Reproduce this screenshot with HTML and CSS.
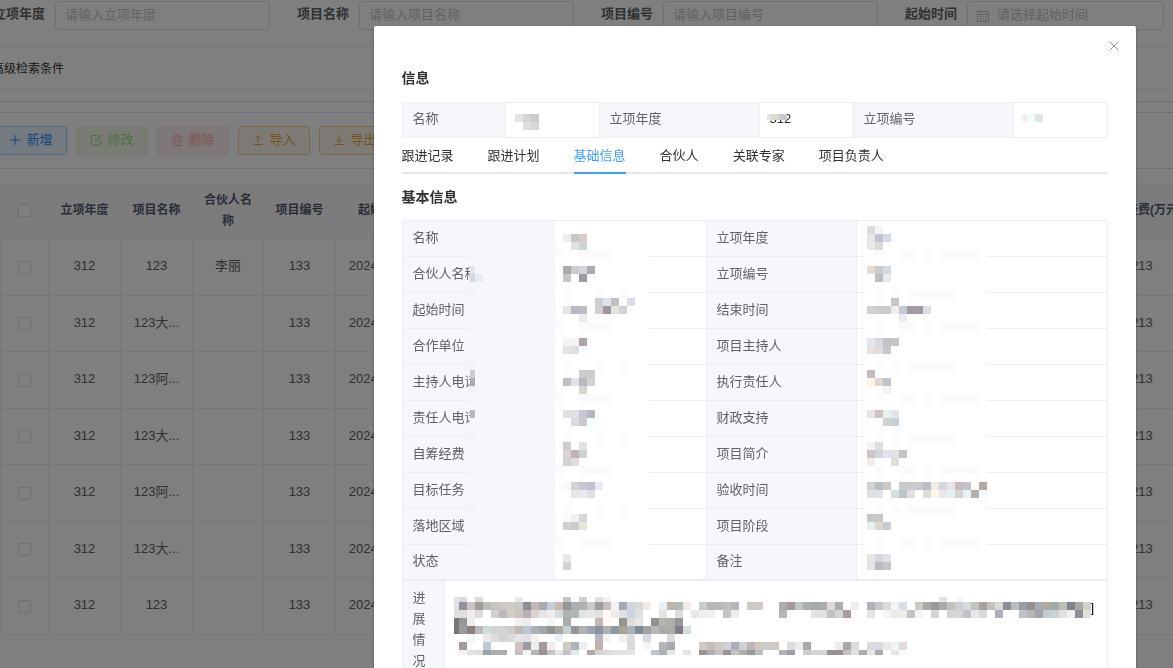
FILE: index.html
```html
<!DOCTYPE html>
<html lang="zh-CN">
<head>
<meta charset="utf-8">
<title>项目信息</title>
<link rel="stylesheet" href="styles.css">
</head>
<body>
<main class="page">
  <form class="filters">
    <div class="field"><label for="f-year">立项年度</label><input id="f-year" class="box" type="text" placeholder="请输入立项年度"></div>
    <div class="field"><label for="f-name">项目名称</label><input id="f-name" class="box" type="text" placeholder="请输入项目名称"></div>
    <div class="field"><label for="f-code">项目编号</label><input id="f-code" class="box" type="text" placeholder="请输入项目编号"></div>
    <div class="field field-date"><label for="f-start">起始时间</label>
      <div class="box date-box">
        <svg class="calendar" viewBox="0 0 12 12" fill="none" stroke="currentColor"><path d="M.5 1.5h11v10H.5zM.5 4.5h11M3.5 0v2.5M8.5 0v2.5M2.5 6.5h1.5M5.3 6.5h1.5M8 6.5h1.5M2.5 9h1.5M5.3 9h1.5M8 9h1.5"/></svg>
        <input id="f-start" type="text" placeholder="请选择起始时间">
      </div>
    </div>
  </form>
  <div class="advanced">高级检索条件</div>
  <div class="divider"></div>
  <div class="toolbar">
    <button class="btn primary" type="button"><svg viewBox="0 0 12 12"><path d="M6 1v10M1 6h10"/></svg>新增</button>
    <button class="btn success" type="button" disabled><svg viewBox="0 0 12 12"><path d="M7 1.5H1.500v9.500h9V6M5 7.500l.3-1.800L10 1l1.300 1.300-4.700 4.600z"/></svg>修改</button>
    <button class="btn danger" type="button" disabled><svg viewBox="0 0 12 12"><path d="M.5 3h11M4 3V1h4v2M2 3v8.500h8V3M4.700 5v4.500M7.300 5v4.500"/></svg>删除</button>
    <button class="btn warning" type="button"><svg viewBox="0 0 12 12"><path d="M1.500 10.500h9M6 9V1.500M3 4.500l3-3 3 3"/></svg>导入</button>
    <button class="btn warning" type="button"><svg viewBox="0 0 12 12"><path d="M1.500 10.500h9M6 1v7.500M3 5.500l3 3 3-3"/></svg>导出</button>
  </div>
  <table class="grid">
    <colgroup><col class="c-check"><col class="c-std"><col class="c-std"><col class="c-partner"><col class="c-std"><col class="c-date"><col><col class="c-date"></colgroup>
    <thead><tr><th><input type="checkbox" aria-label="全选"></th><th>立项年度</th><th>项目名称</th><th>合伙人名称</th><th>项目编号</th><th>起始时间</th><th></th><th class="money">自筹经费(万元)</th></tr></thead>
    <tbody>
      <tr><td><input type="checkbox" aria-label="选择"></td><td>312</td><td>123</td><td>李丽</td><td>133</td><td>2024-01-01</td><td></td><td>213</td></tr>
      <tr><td><input type="checkbox" aria-label="选择"></td><td>312</td><td>123大...</td><td></td><td>133</td><td>2024-01-01</td><td></td><td>213</td></tr>
      <tr><td><input type="checkbox" aria-label="选择"></td><td>312</td><td>123阿...</td><td></td><td>133</td><td>2024-01-01</td><td></td><td>213</td></tr>
      <tr><td><input type="checkbox" aria-label="选择"></td><td>312</td><td>123大...</td><td></td><td>133</td><td>2024-01-01</td><td></td><td>213</td></tr>
      <tr><td><input type="checkbox" aria-label="选择"></td><td>312</td><td>123阿...</td><td></td><td>133</td><td>2024-01-01</td><td></td><td>213</td></tr>
      <tr><td><input type="checkbox" aria-label="选择"></td><td>312</td><td>123大...</td><td></td><td>133</td><td>2024-01-01</td><td></td><td>213</td></tr>
      <tr><td><input type="checkbox" aria-label="选择"></td><td>312</td><td>123</td><td></td><td>133</td><td>2024-01-01</td><td></td><td>213</td></tr>
    </tbody>
  </table>
</main>

<div class="overlay">
  <section class="dialog" role="dialog" aria-modal="true" aria-labelledby="dlg-title">
    <button class="close" type="button" aria-label="关闭"><svg viewBox="0 0 10 10"><path d="M.7.7l8.600 8.600M9.300.7L.7 9.300"/></svg></button>
    <h2 id="dlg-title">信息</h2>
    <div class="panel">
      <table class="desc summary">
        <colgroup><col class="s-first"><col class="s-value"><col class="s-label"><col class="s-value"><col class="s-label"><col></colgroup>
        <tr><th>名称</th><td></td><th>立项年度</th><td>312</td><th>立项编号</th><td></td></tr>
      </table>
      <svg class="mosaic" id="mosaic-summary" width="706" height="36" aria-hidden="true"></svg>
    </div>
    <nav class="tabs">
      <button type="button">跟进记录</button><button type="button">跟进计划</button><button type="button" class="active">基础信息</button><button type="button">合伙人</button><button type="button">关联专家</button><button type="button">项目负责人</button>
    </nav>
    <h2 class="sub">基本信息</h2>
    <div class="panel">
      <table class="desc">
        <colgroup><col class="d-first"><col class="d-value"><col class="d-label"><col></colgroup>
        <tr><th>名称</th><td></td><th>立项年度</th><td></td></tr>
        <tr><th>合伙人名称</th><td></td><th>立项编号</th><td></td></tr>
        <tr><th>起始时间</th><td></td><th>结束时间</th><td></td></tr>
        <tr><th>合作单位</th><td></td><th>项目主持人</th><td></td></tr>
        <tr><th>主持人电话</th><td></td><th>执行责任人</th><td></td></tr>
        <tr><th>责任人电话</th><td></td><th>财政支持</th><td></td></tr>
        <tr><th>自筹经费</th><td></td><th>项目简介</th><td></td></tr>
        <tr><th>目标任务</th><td></td><th>验收时间</th><td></td></tr>
        <tr><th>落地区域</th><td></td><th>项目阶段</th><td></td></tr>
        <tr><th>状态</th><td></td><th>备注</th><td></td></tr>
      </table>
      <table class="desc progress">
        <colgroup><col class="p-label"><col></colgroup>
        <tr><th>进展情况</th><td>]</td></tr>
      </table>
      <svg class="mosaic" id="mosaic-detail" width="706" height="460" aria-hidden="true"></svg>
    </div>
  </section>
</div>
<script src="mosaic.js"></script>
</body>
</html>
```
FILE: styles.css
```css
* { box-sizing: border-box; }

body {
  margin: 0;
  overflow: hidden;
  background: #fff;
  color: #606266;
  font: 13px/20px "Liberation Sans", "Noto Sans CJK SC", sans-serif;
}

button, input { font: inherit; color: inherit; }

.page { overflow: hidden; min-height: 100vh; }

.filters {
  display: flex;
  gap: 27px;
  margin-left: -7px;
  padding: 1px 9px 16px 0;
  border-bottom: 1px solid #e6ebf5;
}
.field { display: flex; flex: none; align-items: center; gap: 10px; }
.field label { font-weight: 700; white-space: nowrap; line-height: 26px; align-self: flex-start; }
.box {
  width: 215px;
  height: 29px;
  padding: 0 9px 2px;
  border: 1px solid #dcdfe6;
  border-radius: 4px;
  background: #fff;
}
.field-date { flex: 1; min-width: 0; }
.date-box { display: flex; flex: 1; min-width: 0; align-items: center; gap: 8px; width: auto; padding-bottom: 0; color: #c0c4cc; }
.date-box input { flex: 1; min-width: 0; padding: 0 0 2px; border: 0; background: none; }
.calendar { width: 12px; height: 12px; flex: none; }
::placeholder { color: #c0c4cc; opacity: 1; }

.advanced {
  margin-left: -8px;
  padding: 12px 0 10px;
  border-bottom: 1px solid #e6ebf5;
  color: #303133;
  font-size: 12px;
}
.divider { height: 12px; border-bottom: 1px solid #dcdfe6; }

.toolbar {
  display: flex;
  gap: 9px;
  margin: 10px 0 14px;
  padding: 13px 0;
  border: solid #dfe3ea;
  border-width: 1px 0;
}
.btn {
  display: flex;
  flex: none;
  align-items: center;
  justify-content: center;
  gap: 5px;
  width: 72px;
  height: 29px;
  padding: 0 0 1px;
  border: 1px solid;
  border-radius: 3px;
}
.btn:first-child { margin-left: -5px; }
.btn svg, .close svg { fill: none; stroke: currentColor; }
.btn svg { width: 12px; height: 12px; }
.primary { color: #1890ff; background: #e8f4ff; border-color: #a3d3ff; }
.success { color: #a4da89; background: #f0f9eb; border-color: #e1f3d8; }
.danger { color: #f9a7a7; background: #fef0f0; border-color: #fde2e2; }
.warning { color: #e6a23c; background: #fdf6ec; border-color: #f5cf8f; }

.grid {
  width: calc(100% + 16px);
  table-layout: fixed;
  border-collapse: separate;
  border-spacing: 0;
  border-left: 1px solid #ebeef5;
  text-align: center;
}
.grid th, .grid td {
  padding: 0 8px 2px;
  border: solid #ebeef5;
  border-width: 0 1px 1px 0;
  white-space: nowrap;
}
.grid th {
  height: 56px;
  padding: 0 11px;
  background: #f8f8f9;
  color: #515a6e;
  font-size: 12px;
  line-height: 21px;
  white-space: normal;
}
.grid th.money { padding: 0; white-space: nowrap; }
.grid td { height: 56px; }
.grid tbody tr:nth-child(odd) td { height: 57px; }
.grid input {
  display: block;
  width: 13px;
  height: 13px;
  margin: 0 auto;
  appearance: none;
  border: 1px solid #dcdfe6;
  border-radius: 2px;
  background: #fff;
}
.grid th:first-child, .grid td:first-child { padding: 0; }
.c-check { width: 48px; }
.c-std { width: 72px; }
.c-partner { width: 71px; }
.c-date { width: 93px; }

.overlay {
  position: fixed;
  inset: 0;
  display: flex;
  align-items: flex-start;
  justify-content: flex-end;
  overflow: hidden;
  padding: 26px 37px 0 0;
  background: rgba(0, 0, 0, 0.5);
}
.dialog {
  position: relative;
  flex: none;
  width: 65vw;
  padding: 42px 28px 28px;
  border-radius: 2px;
  background: #fff;
  box-shadow: 0 1px 3px rgba(0, 0, 0, 0.3);
}
.close {
  position: absolute;
  top: 15px;
  right: 17px;
  width: 10px;
  height: 10px;
  padding: 0;
  border: 0;
  background: none;
  color: #909399;
}
.close svg { display: block; width: 10px; height: 10px; }
h2 {
  margin: 0 0 14px;
  color: #303133;
  font-size: 14px;
  line-height: 20px;
}
h2.sub { margin: 13px 0; }

.panel { position: relative; }
.mosaic { position: absolute; top: 0; left: 0; }
.desc {
  width: 100%;
  table-layout: fixed;
  border-collapse: separate;
  border-spacing: 0;
  border: solid #ebeef5;
  border-width: 1px 0 0 1px;
}
.desc th, .desc td {
  height: 36px;
  padding: 0 10px 2px;
  border: solid #ebeef5;
  border-width: 0 1px 1px 0;
  text-align: left;
  font-weight: 400;
}
.desc th { background: #f5f7fb; color: #606266; }
.desc td { color: #303133; }
.desc tr:last-child th, .desc tr:last-child td { height: 35px; }
.s-first { width: 103px; }
.s-value { width: 94px; }
.s-label { width: 160px; }
.d-first { width: 151px; }
.d-value { width: 153px; }
.d-label { width: 150px; }
.p-label { width: 42px; }
.progress th, .progress td { padding-top: 6px; padding-bottom: 8px; line-height: 21px; vertical-align: top; }
.progress td { padding-top: 16px; padding-right: 13px; text-align: right; color: #000; }

.tabs {
  display: flex;
  gap: 34px;
  border-bottom: 2px solid #e4e7ed;
}
.tabs button {
  height: 36px;
  margin-bottom: -2px;
  padding: 2px 0 0;
  border: 0;
  border-bottom: 2px solid transparent;
  background: none;
  color: #303133;
}
.tabs .active { color: #409eff; border-color: #409eff; }
```
FILE: mosaic.js
```js
// Draws the tiles that hide private values. Each row: x, y, height, tile colours ("-" leaves a gap).
// The first tile is `first` px wide, the others 8 px.
function tile(svg, x, y, w, h, fill) {
  const r = document.createElementNS("http://www.w3.org/2000/svg", "rect");
  const a = { x, y, width: w, height: h, fill };
  for (const k in a) r.setAttribute(k, a[k]);
  svg.appendChild(r);
}
function draw(id, ox, oy, rows) {
  const svg = document.getElementById(id);
  for (const [x, y, h, colours, first = 8] of rows) {
    let px = x - ox, w = first;
    for (const c of colours.split(" ")) {
      if (c !== "-") tile(svg, px, y - oy, w, h, "#" + c);
      px += w;
      w = 8;
    }
  }
}
draw("mosaic-summary", 402, 102, [
  [515, 114, 8, "e6e3df d3d3d4 c8cccf"],
  [515, 122, 8, "- dedde0 d9d6d4"],
  [767, 114, 6, "e4e4e6 dcdace c8c9cf", 4],
  [1022, 114, 8, "f1eeec f1fcfb dfe6e8", 5]
]);
const detail = document.getElementById("mosaic-detail");
tile(detail, 68, 11, 85, 344, "#f5f7fb");
tile(detail, 153, 11, 94, 344, "#fff");
tile(detail, 464, 30, 120, 328, "#fff");
[250, 290, 322, 362, 394, 434, 466, 506, 538].forEach((y, i) => {
  const a = i % 2 ? "f2f4f9 - f3f5fa - - f3f5fa f3f5fa" : "- f3f5fa - f3f5fa f3f5fa f3f5fa f3f5fa f3f5fa";
  draw("mosaic-detail", 402, 220, [
    [467, y, 8, a],
    [555, y, 8, i % 2 ? "- fafafd - - - fafafd - - fafafd" : "fafafd - - fafafd fafafd fafafd fafafd - -"],
    [867, y, 8, i % 2 ? "- fafafd - fafafd - fafafd fafafd fafafd fafafd fafafd fafafd" : "- fafafd - - fafafd fafafd - fafafd - fafafd fafafd fafafd fafafd fafafd"]
  ]);
});
draw("mosaic-detail", 402, 220, [
  [563, 234, 8, "f0ece9 c5c8c6 d6cdc7"],
  [563, 242, 8, "- dfe3e5 d0d3d6"],
  [563, 266, 8, "aaaaaa c8ccd2 d4d4d4 a9aab5"],
  [563, 274, 8, "cac5c3 - a09aa2"],
  [470, 266, 8, "e5e4ea", 5],
  [470, 274, 8, "d5d7df e6ecf4", 5],
  [595, 298, 8, "cfd0d1 dbe4ec c2c0c4 - dadde7"],
  [563, 306, 8, "e5e6e3 b6b9c5 bcc0c4 - d1cdd0 a1959f e2e3de d1d2d1"],
  [579, 314, 8, "e9ecef"],
  [563, 338, 8, "f4f4f3 f4f4f2 aca6ab"],
  [563, 346, 8, "e8e3e0 dcdfe4 f9fdff"],
  [579, 370, 8, "cbccd0 d0ccc8"],
  [563, 378, 8, "c2bfc4 e0e3ed b9bac0 d0d3d7"],
  [579, 386, 8, "d8d4d2"],
  [470, 370, 8, "c9ccd0", 5],
  [470, 378, 8, "aaabad", 5],
  [470, 386, 8, "f0f0f5", 5],
  [563, 410, 8, "e0e0e1 dfe1e3 c6c7d3 b4b8be"],
  [563, 418, 8, "- d8dce1 ccc8c8 f3feff"],
  [470, 410, 8, "b9babf", 5],
  [563, 442, 8, "cccccc - e5e1e2"],
  [563, 450, 8, "dad5d5 c2b3b7 ced2d6"],
  [563, 458, 8, "d2d2d3 dfdee1"],
  [563, 482, 8, "fcf8f7 d1d3d8 c8c8ce c1c1d0 e8ebf2"],
  [563, 490, 8, "- e7e7e4 e8ebf6 e0e0e2"],
  [563, 514, 8, "fcfbf7 f0f0f0 d5d6da"],
  [563, 522, 8, "d2cfcd c9ccc7 ebe6da"],
  [563, 554, 8, "ebe8e6"],
  [563, 562, 8, "d6d3d1"],
  [867, 226, 8, "dcdcdc f5f5f5"],
  [867, 234, 8, "e6e6e5 c0c3d0 d3dae4"],
  [867, 242, 8, "ebe8e6 dadad8"],
  [867, 266, 8, "e5ddd1 c9cccd d4d9dd"],
  [867, 274, 8, "- b9bec2 e9ecef"],
  [891, 298, 8, "c6c7cb"],
  [867, 306, 8, "d4d0d1 cccccd cccdca f3eeea c3cad4 a39aa2 a39aa2 dbe1e4"],
  [899, 314, 8, "f0eced"],
  [867, 338, 8, "e3e9ed d8d9e0 c2c3c5 c6c6c7"],
  [867, 346, 8, "e8e1e0 e0dfdd c7c8cc"],
  [867, 370, 8, "c5bbc0"],
  [867, 378, 8, "fdf4e6 e0d8d0 c1c3ca"],
  [883, 386, 8, "f4f4f5"],
  [867, 410, 8, "e5e6e5 cec3c4 e5f1ec e1e7ed"],
  [867, 418, 8, "fffcfc - d7d2d2 c6d0d7"],
  [867, 442, 8, "f4f5f5 dbdfe1"],
  [867, 450, 8, "cdc5c7 d2d6da dfe2ed e0e2e2 c3c4c7"],
  [867, 458, 8, "f1edeb - - dedfdb"],
  [867, 482, 8, "d3d2d1 b9c0c5 cbcbc3 - c9c9c9 c9cacb cbc8ca bbbdc6 f1ece9 d5d6df e5e5e8 c7bac0 c1c2ca - b1aaa5"],
  [867, 490, 8, "dde1e6 e2e3e4 - d4dfdd b9c5c9 e3dfe0 - dfded9 fef7eb eae9eb e2f2f4 d7d2d1 e7f3f2 b5afad f6fbfe"],
  [867, 514, 8, "c7c8cb c6c7c7"],
  [867, 522, 8, "e5f0ec dfd5cf c8cbd0"],
  [867, 554, 8, "e6e7e5 d3d9de e0e2e5"],
  [867, 562, 8, "e3e4e6 babbc1 c4c6cb"],
  [454, 597, 5, "e3e4e3 d9d9d9 - d9dad9 - - - - e8e8e4 - - - - - c5c5c6 - ccced0 - e4e1dc f1f1f1", 5],
  [939, 597, 5, "dfe3eb - f5f5f5"],
  [454, 602, 8, "e0e1e1 93929c c7c5c5 a39a9a bcbcb7 c6c4c0 cbc8c5 cdcbc4 c8c8c6 8f8c94 c3b9bb a9a9af c3cfdf cab8ae 969898 acb0b0 aeb2b2 c9c9c7 9b9d9e c8bdc1 eff2f1 a5aab6 d3d7d8 d9dbda f2ece9 - e9eff2 beb6ad b6bab8 f1ece8 - c8cccc b5b8b8 bab9b7 bfbec0 b6b6ba - cecac3 d0ccc3", 5],
  [779, 602, 8, "acadac a59a98 c0c6c5 abafae a3abac a9aead dcd9d6 acadb1 - ececed - b2b2b6 c6c7ca dddad6 f2f3f3 d8dde6 - cdc8c1 a9aaae 9d969b aaaaad c3c1be cbd1d6 d6dcde c5c3bf a9a29e c4c0c1 dcd8d3 8f9097 babcc0 969fa8 95908e a5aab5 b3a9a0 a2a9a9 b8bfb9 7f828c a9a8a2 d2d1c5"],
  [454, 610, 8, "dfdfe0 dddedd f2ecea dcdcda - d0d0d1 bdb6bc d1ccc4 cbc5c0 b7b0b8 dbd3cc e3e5e9 f2ece9 d5dadd aeb4b5 b0b7b8 e4e4e2 e5e6e5 e1e2e0 fefaf3 ececeb e1e2e2 c8d6e5 dfe1e0 - - e3e4e3 - dcdedc - e7e8e7 eff0ef f0f2f1 - c4c4c4 f0ece9", 5],
  [779, 610, 8, "b4b6b8 - - - e3e4e4 e0e1e0 c3c0c4 d3d5d3 a59c9b - - e3e4e4 - f1f6f5 e9ecea f0ebe9 c4c4c4 f4f4f3 - d3d4d4 - d4d6d4 d5d6d4 c4c2c6 e4e8ea dadada - acb0ba - - bcc2c8 b4b6b8 a5a2a8 c3cbd5 cbd3d3 e1e2de f0edec 908e99 e6e0dc"],
  [454, 618, 8, "76777b 96999a edeeed - - - - - f0eff1 ededee - - f4f5f4 - a5adaf - - - bfb8b4 fef9f4 - 979591 dedfdd e7e8e8 - 96938e b6b4b2 adafa9 96979c", 5],
  [454, 626, 8, "75777b 999c9e 8e827e bbbbbf cedddc d3d3d4 d3d4d6 cdcdd0 c3b9b1 bac6d4 adb3b5 9fa8ab 929492 a8a8a7 c3cfd0 979699 b1b3b3 9aa4b0 8c93a0 aeb1b2 8d9aa5 a8a393 a8b1b6 7e8999 a4a3a4 bbb8bd adaaa6 adaba8 827b83 d3e0e0", 5],
  [467, 634, 8, "f3f7fa - e8e9e7 dbdcdc d3d3d4 dadada e3e5ea e0e1e4 f1f1f0 - - ebf0f7 - - - - b4b8c0 f4f4f4 - f0f0f0 dcdde0 - d7dbe4 - - dcdbd9"],
  [459, 642, 8, "a69c9d - - c1cad0 - - - cdc4bd 9b9aa5 ebecec a39a9a f2ede9 - d1cbc2 adb4bb eceff2 - c5b2ac - - - dddad5 - f5f6f5 - b5b5b5 a9aaae - - - d1cac2 c6beb8 d1cac2 d2d2d6 acaebe d0d2d3 bfb7b6 d0c9c4 c9cccd d1cac3 - dcdddf ebebeb a8a8a8 - - - ebebea a9a8a8 dbdbda - d7dce3 d7dce4 eaeaea f3f3f2 e2dbd8"],
  [459, 650, 5, "f1f2f1 e3e4e3 dfdfde 9ba4a8 acaeaf acacac - c2c2c3 f2f3f2 b5b5b5 9a9194 c5c5c4 e5e6e4 c4c3c6 e3e9ee - b7a8a5 d4d5d5 dddddd e1e3e2 dfe2e0 e3e4e3 - - bcc6ce afb2b2 e5e5e4 - e4e6e4 - 9c9392 adafaf c3c2c5 9b9295 c4c4c4 acafae 979a9f babfbd - - b1b5b8 9c9ea5 - cccfce d3d7d2 d2d6d1 989398 979297 c2c0c3 dfe0e0 aaaeb0 e5e6e5 a8acab - e5e6e4"]
]);
```
